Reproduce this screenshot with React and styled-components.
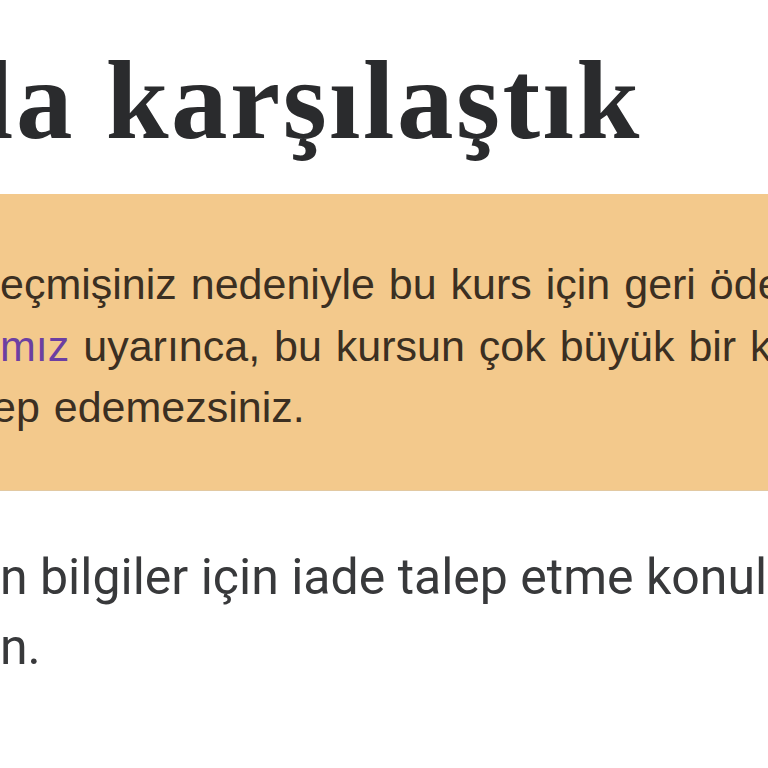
import React from "react";
import styled, { createGlobalStyle } from "styled-components";

const Global = createGlobalStyle`
  html, body { margin: 0; padding: 0; background: #ffffff; }
  body { width: 768px; height: 768px; overflow: hidden; }
`;

const Page = styled.main`
  width: 768px;
  height: 768px;
  overflow: hidden;
  background: #fff;
  display: flex;
  flex-direction: column;
`;

const Heading = styled.h1`
  margin: 36px 0 0 -18px;
  font-family: "Liberation Serif", "Times New Roman", serif;
  font-weight: 700;
  font-size: 113px;
  letter-spacing: 2.5px;
  line-height: 128px;
  color: #2a2b2d;
  white-space: nowrap;
`;

const Alert = styled.section`
  margin-top: 30px;
  background: #f3c98c;
  border-bottom: 1px solid #e2c9a2;
  padding: 60px 0 51px 0;
  display: flex;
  flex-direction: column;
`;

const AlertLine = styled.div`
  font-family: "Liberation Sans", Arial, sans-serif;
  font-size: 43px;
  word-spacing: 2px;
  line-height: 61.5px;
  color: #3b2f22;
  white-space: nowrap;
  margin-left: ${(p) => p.$shift || 0}px;
`;

const Link = styled.a`
  color: #6c3fa2;
  text-decoration: none;
`;

const Body = styled.div`
  margin-top: 51px;
  display: flex;
  flex-direction: column;
`;

const BodyLine = styled.div`
  font-family: Roboto, "Liberation Sans", sans-serif;
  font-size: 50px;
  line-height: 70px;
  color: #38393b;
  white-space: nowrap;
  margin-left: ${(p) => p.$shift || 0}px;
`;

export default function App() {
  return (
    <>
      <Global />
      <Page>
        <Heading>la karşılaştık</Heading>
        <Alert>
          <AlertLine $shift={0}>eçmişiniz nedeniyle bu kurs için geri ödeme</AlertLine>
          <AlertLine $shift={0}>
            <Link href="#">mız</Link> uyarınca, bu kursun çok büyük bir kısmını
          </AlertLine>
          <AlertLine $shift={-8}>ep edemezsiniz.</AlertLine>
        </Alert>
        <Body>
          <BodyLine $shift={0}>n bilgiler için iade talep etme konulu</BodyLine>
          <BodyLine $shift={0}>n.</BodyLine>
        </Body>
      </Page>
    </>
  );
}
